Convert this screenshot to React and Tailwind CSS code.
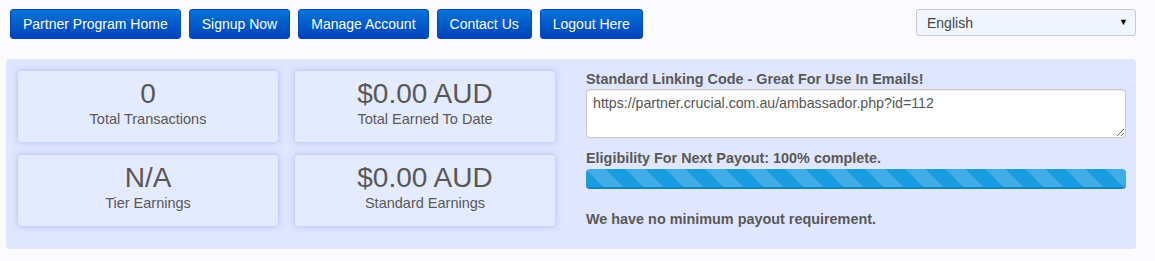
import React from "react";

const navButtons = [
  "Partner Program Home",
  "Signup Now",
  "Manage Account",
  "Contact Us",
  "Logout Here",
];

const stats = [
  { value: "0", label: "Total Transactions" },
  { value: "$0.00 AUD", label: "Total Earned To Date" },
  { value: "N/A", label: "Tier Earnings" },
  { value: "$0.00 AUD", label: "Standard Earnings" },
];

function StatCard({ value, label }) {
  return (
    <div className="flex h-[73px] flex-col items-center rounded-[4px] border border-[#c5d3f7] bg-[#e4eaff] pt-[7px] shadow-[0_0_6px_rgba(120,145,225,0.35)]">
      <div className="text-[28px] leading-[31px] text-[#585858]">{value}</div>
      <div className="text-[14.5px] leading-[20px] text-[#585858]">{label}</div>
    </div>
  );
}

export default function App() {
  return (
    <div
      className="min-h-[261px] w-full bg-[#fbfbfd]"
      style={{ fontFamily: '"Liberation Sans", Arial, sans-serif' }}
    >
      <div className="ml-[6px] w-[1130px] pt-[9px]">
        <div className="flex items-start justify-between pl-[4px]">
          <div className="flex gap-[8px]">
            {navButtons.map((label) => (
              <button
                key={label}
                className="h-[30px] rounded-[3px] border border-[#0049b8] bg-gradient-to-b from-[#0c74d8] to-[#0042bd] px-[12px] text-[14px] text-white"
              >
                {label}
              </button>
            ))}
          </div>
          <div className="relative h-[27px] w-[220px] rounded-[3px] border border-[#c9c9cf] bg-[#f0f5ff]">
            <span className="absolute left-[10px] top-[3px] text-[14px] leading-[20px] text-[#444]">
              English
            </span>
            <span className="absolute right-[7px] top-[5px] text-[9px] leading-[14px] text-black">
              ▼
            </span>
          </div>
        </div>

        <div className="mt-[20px] flex h-[190px] gap-[30px] rounded-[4px] bg-[#dfe6fe] pl-[11px] pr-[11px] pt-[11px]">
          <div className="grid h-fit grid-cols-[262px_262px] gap-x-[15px] gap-y-[11px]">
            {stats.map((s, i) => (
              <StatCard key={i} value={s.value} label={s.label} />
            ))}
          </div>

          <div className="flex w-[540px] flex-col text-[14.4px] font-bold text-[#595959]">
            <div className="leading-[19px]">
              Standard Linking Code - Great For Use In Emails!
            </div>
            <textarea
              readOnly
              defaultValue="https://partner.crucial.com.au/ambassador.php?id=112"
              className="h-[49px] w-[540px] rounded-[4px] border border-[#c8c8c8] bg-white px-[6px] py-[4px] text-[14.2px] font-normal leading-[18px] text-[#555] shadow-[inset_0_1px_1px_rgba(0,0,0,0.08)] outline-none"
            />
            <div className="mt-[11px] leading-[19px]">
              Eligibility For Next Payout: 100% complete.
            </div>
            <div className="mt-[1px] h-[20px] w-[540px] rounded-[4px] border-b-2 border-[#0d86c8] bg-[#1a9ce1] bg-[linear-gradient(45deg,rgba(255,255,255,0.17)_25%,transparent_25%,transparent_50%,rgba(255,255,255,0.17)_50%,rgba(255,255,255,0.17)_75%,transparent_75%,transparent)] bg-[length:40px_40px]" />
            <div className="mt-[21px] leading-[19px]">
              We have no minimum payout requirement.
            </div>
          </div>
        </div>
      </div>
    </div>
  );
}
